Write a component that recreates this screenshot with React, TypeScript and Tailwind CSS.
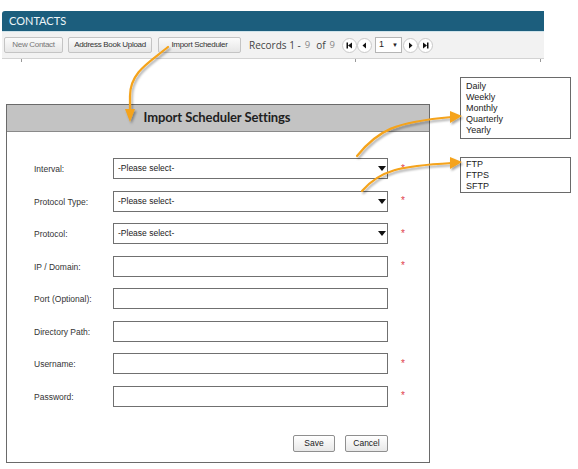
import React from 'react';

const ui = { fontFamily: '"Liberation Sans", Arial, sans-serif' };
const lato = { fontFamily: 'Lato, "Open Sans", sans-serif' };

const rows: { label: string; select?: boolean; required?: boolean }[] = [
    { label: 'Interval:', select: true, required: true },
    { label: 'Protocol Type:', select: true, required: true },
    { label: 'Protocol:', select: true, required: true },
    { label: 'IP / Domain:', required: true },
    { label: 'Port (Optional):' },
    { label: 'Directory Path:' },
    { label: 'Username:', required: true },
    { label: 'Password:', required: true },
];

const PagerButton: React.FC<{ kind: 'first' | 'prev' | 'next' | 'last' }> = ({ kind }) => (
    <div className="shrink-0 w-[15px] h-[15px] rounded-full border border-[#c9c9c9] bg-white flex items-center justify-center">
        <svg width="7" height="7" viewBox="0 0 7 7">
            {kind === 'first' && (
                <>
                    <rect x="0.5" y="0.5" width="1.5" height="6" fill="#111" />
                    <polygon points="6,0.5 6,6.5 2,3.5" fill="#111" />
                </>
            )}
            {kind === 'prev' && <polygon points="5,0.5 5,6.5 1.5,3.5" fill="#111" />}
            {kind === 'next' && <polygon points="2,0.5 2,6.5 5.5,3.5" fill="#111" />}
            {kind === 'last' && (
                <>
                    <polygon points="1,0.5 1,6.5 5,3.5" fill="#111" />
                    <rect x="5" y="0.5" width="1.5" height="6" fill="#111" />
                </>
            )}
        </svg>
    </div>
);

const ToolButton: React.FC<{ w: string; muted?: boolean; children: React.ReactNode }> = ({ w, muted, children }) => (
    <div
        className={`${w} shrink-0 h-[16px] flex items-center justify-center rounded-[2px] border border-[#c4c4c4] bg-gradient-to-b from-[#fbfbfb] to-[#e6e6e6] text-[8px] tracking-[-0.3px] whitespace-nowrap ${muted ? 'text-[#777]' : 'text-[#333]'}`}
    >
        {children}
    </div>
);

export default function App() {
    return (
        <div className="relative w-[578px] h-[469px] bg-white overflow-hidden" style={ui}>
            {/* contacts panel */}
            <div className="ml-[2px] pt-[11px] w-[542px]">
                <div className="h-[21px] rounded-tl-[3px] bg-[#1c5e7d] border-b border-[#cfe3ea] flex items-center px-[7px]">
                    <span className="text-[11px] text-[#eef6f9]" style={lato}>CONTACTS</span>
                </div>
                <div className="h-[27px] bg-[#f2f2f2] border-b border-[#d3d3d3] flex items-center pl-[2px]">
                    <ToolButton w="w-[59px]" muted>New Contact</ToolButton>
                    <div className="w-[5px] shrink-0" />
                    <ToolButton w="w-[84px]">Address Book Upload</ToolButton>
                    <div className="w-[6px] shrink-0" />
                    <ToolButton w="w-[83px]">Import Scheduler</ToolButton>
                    <div className="ml-[8px] w-[93px] shrink-0 whitespace-nowrap text-[10px] text-[#444] flex items-center" style={{ fontFamily: '"Open Sans", sans-serif' }}>
                        <span>Records 1 -</span>
                        <span className="ml-[4px] text-[#888] text-[9.5px]">9</span>
                        <span className="ml-[6px]">of</span>
                        <span className="ml-[4px] text-[#888] text-[9.5px]">9</span>
                    </div>
                    <div className="flex items-center shrink-0">
                        <PagerButton kind="first" />
                        <PagerButton kind="prev" />
                        <div className="ml-[3px] w-[27px] h-[16px] border border-[#b5b5b5] bg-white flex items-center justify-between px-[3px]">
                            <span className="text-[9px] text-[#222]">1</span>
                            <span className="text-[6px] text-[#222]">▼</span>
                        </div>
                        <div className="w-[1px]" />
                        <PagerButton kind="next" />
                        <PagerButton kind="last" />
                    </div>
                </div>
                <div className="flex h-[3px]">
                    <div className="w-[19px]" />
                    <div className="w-px bg-[#999]" />
                    <div className="w-[333px]" />
                    <div className="w-px bg-[#999]" />
                    <div className="w-[184px]" />
                    <div className="w-px bg-[#999]" />
                </div>
            </div>

            {/* dialog */}
            <div className="ml-[6px] mt-[42px] w-[424px] border-[1.5px] border-[#6a6a6a] bg-white">
                <div className="h-[27px] bg-[#c3c3c3] border-b border-[#8a8a8a] flex items-center justify-center pr-[2px]">
                    <span className="text-[13px] font-bold text-[#1e1e1e] tracking-[-0.1px]" style={lato}>Import Scheduler Settings</span>
                </div>
                <div className="pt-[26px] pb-[10px] pl-[27px]">
                    <div className="flex flex-col gap-[11.5px]">
                        {rows.map((r) => (
                            <div key={r.label} className="flex items-center h-[21px]">
                                <div className="w-[79px] text-[8.5px] text-[#333] pt-[2px]">{r.label}</div>
                                <div className="relative w-[275px] h-[21px] border border-[#707070] bg-white flex items-center pl-[4px]">
                                    {r.select && (
                                        <>
                                            <span className="text-[8.5px] text-[#222]">-Please select-</span>
                                            <svg className="absolute right-[1px] top-[7px]" width="8" height="5" viewBox="0 0 8 5">
                                                <polygon points="0,0 8,0 4,5" fill="#111" />
                                            </svg>
                                        </>
                                    )}
                                </div>
                                {r.required && <span className="ml-[13px] text-[10px] leading-none text-[#e0404a]">*</span>}
                            </div>
                        ))}
                    </div>
                    <div className="w-[354px] flex justify-end gap-[10px] mt-[28px]">
                        <div className="w-[42px] h-[17px] border border-[#8f8f8f] rounded-[2px] bg-gradient-to-b from-white to-[#e8e8e8] flex items-center justify-center text-[8.5px] text-[#222]">Save</div>
                        <div className="w-[43px] h-[17px] border border-[#8f8f8f] rounded-[2px] bg-gradient-to-b from-white to-[#e8e8e8] flex items-center justify-center text-[8.5px] text-[#222]">Cancel</div>
                    </div>
                </div>
            </div>

            {/* callout lists */}
            <div className="absolute left-[460px] top-[77px] w-[111px] h-[62px] border border-[#6a6a6a] bg-white pl-[5px] pt-[3px] text-[9px] leading-[11px] text-[#222]">
                <div>Daily</div>
                <div>Weekly</div>
                <div>Monthly</div>
                <div>Quarterly</div>
                <div>Yearly</div>
            </div>
            <div className="absolute left-[460px] top-[157px] w-[111px] h-[36px] border border-[#6a6a6a] bg-white pl-[5px] pt-[1px] text-[9px] leading-[11px] text-[#222]">
                <div>FTP</div>
                <div>FTPS</div>
                <div>SFTP</div>
            </div>

            {/* annotation arrows */}
            <svg className="absolute inset-0 pointer-events-none" width="578" height="469" viewBox="0 0 578 469">
                <defs>
                    <filter id="sh" x="-20%" y="-20%" width="140%" height="140%">
                        <feDropShadow dx="1.5" dy="2" stdDeviation="1.2" floodColor="#000" floodOpacity="0.35" />
                    </filter>
                </defs>
                <g filter="url(#sh)" fill="none" stroke="#f5a31a" strokeWidth="2.2" strokeLinecap="round">
                    <path d="M168 47 C 150 62, 130 72, 130 96 L 130 111" />
                    <path d="M357 156 C 378 130, 395 122, 452 117" />
                    <path d="M362 191 C 380 170, 400 166, 452 163" />
                </g>
                <g filter="url(#sh)" fill="#f5a31a">
                    <polygon points="125,109 135,109 130,122" />
                    <polygon points="450,111 450,123 462,116" />
                    <polygon points="450,157 450,169 462,162" />
                </g>
            </svg>
        </div>
    );
}
